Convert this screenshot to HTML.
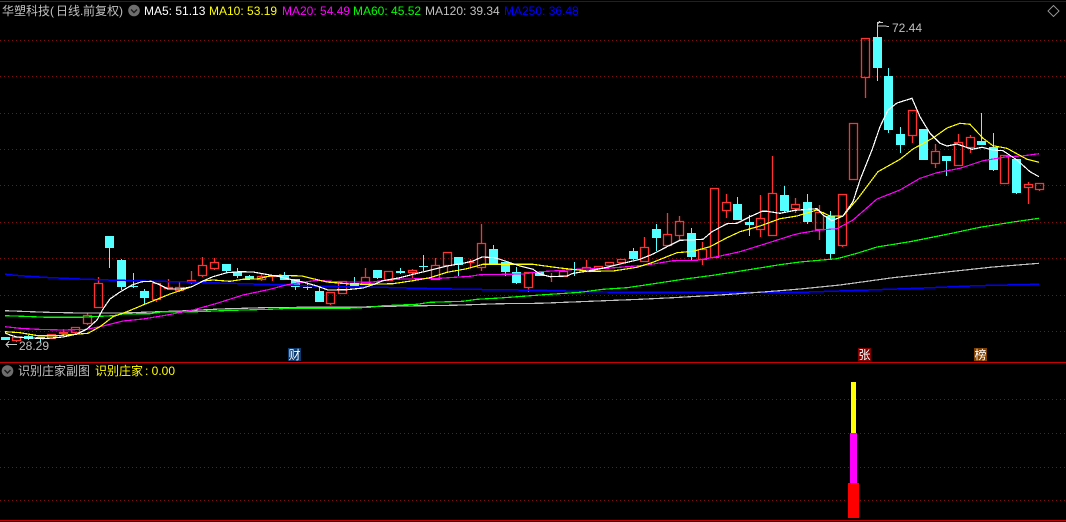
<!DOCTYPE html>
<html lang="zh">
<head>
<meta charset="utf-8">
<title>华塑科技</title>
<style>
html,body{margin:0;padding:0;background:#000;}
#p{position:relative;width:1066px;height:522px;overflow:hidden;background:#000;font-family:"Liberation Sans","WenQuanYi Zen Hei","Noto Sans CJK SC",sans-serif;}
#p svg{position:absolute;left:0;top:0;}
.t{position:absolute;white-space:nowrap;font-size:12px;line-height:14px;}
.c{position:absolute;white-space:nowrap;font-size:12px;line-height:14px;font-family:"WenQuanYi Zen Hei","Noto Sans CJK SC",sans-serif;}
.m{position:absolute;width:13px;height:13px;top:348px;color:#fff;font-size:12px;line-height:13px;text-align:center;font-family:"WenQuanYi Zen Hei","Noto Sans CJK SC",sans-serif;}
</style>
</head>
<body>
<div id="p">
<svg width="1066" height="522" viewBox="0 0 1066 522" shape-rendering="crispEdges">
<defs>
<pattern id="d" patternUnits="userSpaceOnUse" width="4" height="1"><rect width="1" height="1" fill="#801010"/></pattern>
</defs>
<g fill="url(#d)">
<rect y="40" width="1066" height="1"/><rect y="76" width="1066" height="1"/><rect y="113" width="1066" height="1"/><rect y="149" width="1066" height="1"/><rect y="185" width="1066" height="1"/><rect y="222" width="1066" height="1"/><rect y="258" width="1066" height="1"/><rect y="295" width="1066" height="1"/><rect y="331" width="1066" height="1"/><rect y="399" width="1066" height="1"/><rect y="433" width="1066" height="1"/><rect y="467" width="1066" height="1"/><rect y="500" width="1066" height="1"/>
</g>
<path d="M0 1.5H1066" stroke="#700000" fill="none"/>
<path d="M0 1.5H22" stroke="#d00000" fill="none"/>
<path d="M0 362.5H1066M0 520.5H1066" stroke="#c80000" fill="none"/>

<path fill="none" stroke="#ff3232" stroke-width="1.3" shape-rendering="geometricPrecision" d="
M12.5 337.5h8v3h-8zM16.5 341V342
M47.5 334.5h8v4h-8z
M59.5 332.5h8v1h-8zM63.5 329V332M63.5 334V335
M71.5 327.5h8v5h-8zM75.5 333V334
M83.5 315.5h8v8h-8zM87.5 313V315M87.5 324V325
M94.5 283.5h8v24h-8zM98.5 277V283
M152.5 283.5h8v16h-8zM156.5 300V302
M164.5 287.5h8v1h-8zM168.5 279V287
M175.5 287.5h8v3h-8zM179.5 282V287M179.5 291V292
M187.5 280.5h8v2h-8zM191.5 271V280M191.5 283V284
M198.5 265.5h8v10h-8zM202.5 257V265M202.5 276V277
M210.5 262.5h8v6h-8zM214.5 258V262M214.5 269V270
M257.5 276.5h8v3h-8zM261.5 274V276M261.5 280V281
M268.5 276.5h8M272.5 275V281
M326.5 292.5h8v11h-8zM330.5 304V305
M338.5 281.5h8v12h-8z
M361.5 277.5h8v7h-8zM365.5 268V277
M384.5 271.5h8v9h-8z
M408.5 270.5h8v2h-8zM412.5 269V270M412.5 273V278
M431.5 265.5h8v14h-8zM435.5 258V265
M443.5 252.5h8v13h-8zM447.5 266V272
M466.5 262.5h8M470.5 259V268
M477.5 243.5h8v24h-8zM481.5 224V243M481.5 268V271
M524.5 272.5h8v15h-8zM528.5 288V292
M547.5 276.5h8M551.5 273V282
M559.5 271.5h8v5h-8z
M582.5 267.5h8v4h-8zM586.5 260V267
M594.5 266.5h8v2h-8z
M605.5 262.5h8v3h-8zM609.5 266V267
M617.5 259.5h8v3h-8zM621.5 263V264
M640.5 247.5h8v14h-8zM644.5 237V247
M663.5 234.5h8v11h-8zM667.5 213V234
M675.5 221.5h8v14h-8zM679.5 216V221M679.5 236V241
M698.5 249.5h8v10h-8zM702.5 242V249M702.5 260V265
M710.5 188.5h8v69h-8z
M722.5 202.5h8v8h-8zM726.5 194V202M726.5 211V218
M756.5 218.5h8v11h-8zM760.5 195V218M760.5 230V237
M768.5 193.5h8v42h-8zM772.5 156V193
M791.5 204.5h8v4h-8zM795.5 198V204M795.5 209V213
M815.5 212.5h8v17h-8zM819.5 205V212M819.5 230V240
M838.5 194.5h8v51h-8zM842.5 246V247
M849.5 123.5h8v56h-8z
M861.5 38.5h8v39h-8zM865.5 78V98
M908.5 110.5h8v25h-8zM912.5 136V143
M931.5 151.5h8v12h-8zM935.5 144V151M935.5 164V168
M954.5 142.5h8v23h-8zM958.5 134V142
M966.5 137.5h8v10h-8zM970.5 135V137M970.5 148V153
M1000.5 155.5h8v28h-8z
M1024.5 184.5h8v3h-8zM1028.5 182V184M1028.5 188V204
M1035.5 183.5h8v6h-8zM1039.5 190V191"/>

<path fill="#54ffff" d="
M1 337h9v3h-9zM24 336h9v3h-9zM36 337h9v1h-9zM105 236h9v12h-9zM117 260h9v27h-9zM129 286h9v1h-9zM140 291h9v7h-9zM222 264h9v7h-9zM233 272h9v4h-9zM245 276h9v3h-9zM280 276h9v4h-9zM291 279h9v8h-9zM303 287h9v1h-9zM315 291h9v11h-9zM350 283h9v3h-9zM373 270h9v8h-9zM396 271h9v2h-9zM419 266h9v1h-9zM454 257h9v8h-9zM489 249h9v16h-9zM501 262h9v10h-9zM512 272h9v11h-9zM535 272h9v4h-9zM570 269h9v1h-9zM629 251h9v8h-9zM652 229h9v9h-9zM687 233h9v24h-9zM733 204h9v16h-9zM745 222h9v3h-9zM780 195h9v16h-9zM803 202h9v20h-9zM826 216h9v38h-9zM873 37h9v31h-9zM884 76h9v54h-9zM896 134h9v11h-9zM919 129h9v31h-9zM942 156h9v5h-9zM977 141h9v4h-9zM989 147h9v23h-9zM1012 159h9v34h-9z"/>
<path fill="none" stroke="#54ffff" d="
M28.5 335V340M40.5 337V342M109.5 248V268M121.5 259V290M133.5 273V288M144.5 289V304M226.5 271V273M237.5 268V278M249.5 275V279M284.5 272V280M295.5 287V290M307.5 284V290M319.5 287V291M354.5 277V287M377.5 278V279M400.5 268V274M423.5 255V271M458.5 265V276M493.5 245V249M505.5 272V276M516.5 267V284M574.5 262V276M633.5 248V260M656.5 224V251M691.5 228V260M737.5 197V204M749.5 215V236M784.5 186V213M807.5 194V224M830.5 211V259M877.5 22V81M888.5 68V133M900.5 127V153M946.5 161V176M981.5 113V141M993.5 133V171M1016.5 193V194"/>

<g fill="none" stroke-width="1.2">
<polyline stroke="#0000ff" stroke-width="1.5" points="5,274.3 20,275.7 43,277.3 80,279 117,280.3 187,282 220,283 270,284.5 323,286.3 370,287 417,288.3 467,289.3 540,290.3 603,292 800,292.3 860,290.3 917,288.3 977,285.7 1039,284.3"/>
<polyline stroke="#c0c0c0" points="5,310.7 47,312.3 80,313 123,313 187,310.7 220,309 270,307.5 360,307 403,306 453,305.3 500,303.7 540,303.3 580,301.7 640,299.3 673,297.7 720,295 767,291.7 800,289 840,285 893,277.7 940,272.7 993,267 1039,263.3"/>
<polyline stroke="#00ff00" points="5,315.7 23,316.3 47,317.3 80,317.3 113,315.7 123,314 150,313.7 163,311.7 197,311.7 233,310.3 270,309.3 290,308.3 347,308.3 370,307.3 383,305.7 417,304.3 430,302.3 463,301.3 477,299.3 500,298 523,296.3 540,295 580,292.3 603,289.3 627,287.7 650,284.3 683,279.3 713,275.3 747,270 780,264.7 800,262 837,258.7 857,253.3 877,247 910,241.7 947,234.3 980,227.3 1013,222 1039,218.3"/>
<polyline stroke="#ff00ff" points="5,326.7 20,328.3 37,329.3 63,330 87,329.3 103,326 123,321 143,319 167,315 193,310 217,303.3 243,295 270,289.3 287,284.7 303,282.3 317,280.3 337,281.7 370,282.3 393,279.3 440,278.3 470,276.3 480,274.7 523,274 540,271.7 557,270.7 577,269.3 607,268.3 627,266.7 647,265 673,260.7 697,260.3 717,256.7 740,251.7 767,243.3 793,235 800,233.3 820,230 837,228.7 853,220 877,199 900,190 920,178.3 937,172.7 960,168.3 983,160.7 1007,156.7 1022,156 1039,153.7"/>
<polyline stroke="#ffff00" points="5,331.7 20,332.7 38,335.7 57,335.7 88,333.3 100,326.7 113,316.7 127,311.7 143,305 157,299.3 170,294 192,286.7 203,281 213,280 230,281.3 243,279.3 257,279 270,276 280,275.3 302,276 313,278.7 327,282 350,284 370,284.3 393,283.7 413,280.7 430,277.7 447,272.3 467,268.7 483,264.3 533,264.3 540,265.3 560,268 590,271.3 613,271 637,267.3 653,262.3 677,252.7 693,251.3 710,246.7 727,237.7 740,231.7 760,226 780,218.7 797,216 817,210 830,216 843,216 858,198.3 878,171.7 900,159.3 913,149 933,138 947,128 960,123.3 970,124.3 983,138.3 993,145.7 1007,148.3 1027,159.3 1039,162.3"/>
<polyline stroke="#ffffff" points="5,333 10,335 17,337 33,338 43,338.7 63,337 77,334 87,329 97,320 103,309 110,299 120,292 132,285 142,281.7 151,281.3 158,284 168,289 180,289 192,286.7 203,281 213,276.7 227,272.7 240,271.7 253,272 270,275 280,276.7 290,279.3 303,282 317,286 328,290 347,289.7 363,288 372,285 383,280.7 400,277.7 413,274.3 430,270.3 447,266 463,263.3 473,261 482,257 495,257.7 507,261.7 520,266 533,269.3 540,274 550,276.7 567,276 573,273.3 590,270.7 607,267.3 623,263.3 640,259.3 653,254 667,246.7 680,240.3 703,239.3 712,231.7 727,223.7 737,223.3 750,216.7 762,211.3 767,211.3 780,213.3 795,210.3 817,208.7 823,215 832,220.7 843,216 853,201.7 860,180 872,150 880,126.7 888,110 897,103 912,98.3 920,116.7 930,133.3 940,143.3 947,146 957,144 972,149.3 982,147.3 993,150 1003,150.7 1017,160 1030,171.7 1039,176.7"/>
</g>

<g fill="none" stroke="#c8c8c8" stroke-width="1">
<path d="M6 344.5H17M9 341.5L6 344.5L9 347.5"/>
<path d="M877.5 22.5H883M880 21L877.5 24M878 26H884L889 26.5"/>
<path d="M1053.5 5.5L1059 11L1053.5 16.5L1048 11Z" stroke="#8a8a8a"/>
</g>

<rect x="851" y="382" width="5" height="51" fill="#ffff00"/>
<rect x="850" y="433" width="7" height="50" fill="#ff00ff"/>
<rect x="848" y="483" width="11" height="35" fill="#ff0000"/>

<g shape-rendering="geometricPrecision">
<circle cx="134" cy="10.5" r="5.8" fill="#6e6e6e"/>
<path d="M131 9.5l3 3 3-3" fill="none" stroke="#1c1c1c" stroke-width="1.4"/>
<circle cx="7.5" cy="371" r="5.8" fill="#6e6e6e"/>
<path d="M4.5 370l3 3 3-3" fill="none" stroke="#1c1c1c" stroke-width="1.4"/>
</g>
</svg>

<div class="c" style="left:2px;top:4px;color:#c0c0c0;">华塑科技</div>
<div class="t" style="left:50px;top:4px;color:#c0c0c0;">(</div>
<div class="c" style="left:56px;top:4px;color:#c0c0c0;">日线</div>
<div class="t" style="left:80px;top:4px;color:#c0c0c0;">.</div>
<div class="c" style="left:83px;top:4px;color:#c0c0c0;">前复权</div>
<div class="t" style="left:119px;top:4px;color:#c0c0c0;">)</div>
<div class="t" style="left:144px;top:4px;color:#fff;">MA5: 51.13</div>
<div class="t" style="left:209px;top:4px;color:#ff0;">MA10: 53.19</div>
<div class="t" style="left:282px;top:4px;color:#f0f;">MA20: 54.49</div>
<div class="t" style="left:353px;top:4px;color:#0f0;">MA60: 45.52</div>
<div class="t" style="left:425px;top:4px;color:#c0c0c0;">MA120: 39.34</div>
<div class="t" style="left:504px;top:4px;color:#00f;">MA250: 36.48</div>

<div class="t" style="left:892px;top:21px;color:#c0c0c0;">72.44</div>
<div class="t" style="left:19px;top:339px;color:#c0c0c0;">28.29</div>

<div class="m" style="left:288px;background:#0a3a70;">财</div>
<div class="m" style="left:858px;background:#800000;">张</div>
<div class="m" style="left:974px;background:#804000;">榜</div>

<div class="c" style="left:18px;top:364px;color:#c0c0c0;">识别庄家副图</div>
<div class="c" style="left:95px;top:364px;color:#ff0;">识别庄家</div>
<div class="t" style="left:145px;top:364px;color:#ff0;">: 0.00</div>
</div>
</body>
</html>
